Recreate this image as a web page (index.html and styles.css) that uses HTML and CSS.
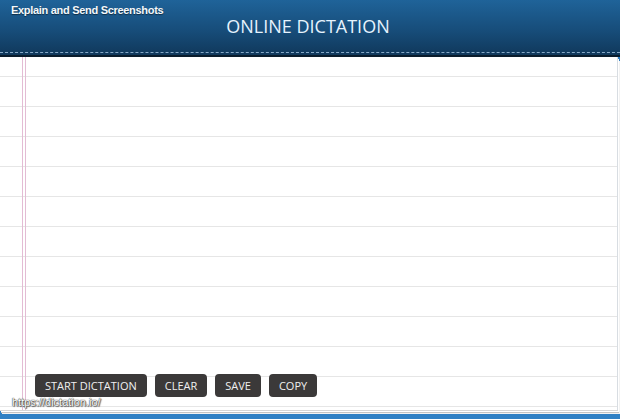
FILE: index.html
```html
<!DOCTYPE html>
<html lang="en">
<head>
    <meta charset="UTF-8">
    <meta name="viewport" content="width=device-width, initial-scale=1.0">
    <title>Online Dictation</title>
    <link rel="stylesheet" href="styles.css">
</head>
<body>
    <header class="topbar">
        <div class="topbar-inner">
            <a class="promo" href="#">Explain and Send Screenshots</a>
            <h1 class="title">ONLINE DICTATION</h1>
        </div>
    </header>

    <main class="paper">
        <div class="writing-area" contenteditable="true"></div>
        <div class="toolbar">
            <button class="tool-button">START DICTATION</button>
            <button class="tool-button">CLEAR</button>
            <button class="tool-button">SAVE</button>
            <button class="tool-button">COPY</button>
        </div>
        <span class="site-url">https://dictation.io/</span>
    </main>
</body>
</html>
```

FILE: styles.css
```css
html, body {
    margin: 0;
    height: 419px;
    overflow: hidden;
}

body {
    background-color: #2f80c4;
    font-family: "Open Sans", "Liberation Sans", sans-serif;
}

/* Header bar */
.topbar {
    background: linear-gradient(to bottom, #1f6399 0%, #174d7a 55%, #10385b 100%);
    border-bottom: 2px solid #0a1c2c;
}

.topbar-inner {
    position: relative;
    height: 52px;
    border-bottom: 1px dashed #86a8c6;
    margin-bottom: 2px;
}

.promo {
    position: absolute;
    left: 11px;
    top: 4px;
    font-family: "Liberation Sans", Arial, sans-serif;
    font-weight: bold;
    font-size: 11px;
    letter-spacing: -0.3px;
    color: #f4f8fb;
    text-decoration: none;
    text-shadow: 0 1px 1px rgba(0, 0, 0, 0.5);
}

.title {
    margin: 0;
    padding-top: 14px;
    padding-right: 4px;
    text-align: center;
    font-weight: normal;
    font-size: 18px;
    line-height: 24px;
    color: #e6f3fd;
}

/* Lined paper */
.paper {
    position: relative;
    display: flex;
    flex-direction: column;
    width: 617px;
    height: 353px;
    background-color: #fff;
    background-image:
        linear-gradient(to right, transparent 22px, #e3bcd4 22px, #e3bcd4 23px, transparent 23px, transparent 25px, #e3bcd4 25px, #e3bcd4 26px, transparent 26px),
        linear-gradient(to bottom, transparent 29px, #e6e6e6 29px, #e6e6e6 30px);
    background-size: 100% 100%, 100% 30px;
    background-position: 0 0, 0 -10px;
    background-repeat: no-repeat, repeat-y;
    box-shadow: 0 1px 0 #d6d6d6, 1px 2px 0 #fff, 1px 3px 0 #c4c4c4, 2px 4px 0 #f2f2f2;
    border-right: 1px solid #d8dde2;
}

.writing-area {
    flex: 1;
    outline: none;
}

.toolbar {
    display: flex;
    gap: 8px;
    padding: 0 0 13px 35px;
}

.tool-button {
    height: 23px;
    padding: 0 10px;
    border: none;
    border-radius: 4px;
    background-color: #3b3939;
    color: #f0f0f0;
    font-family: "Open Sans", "Liberation Sans", sans-serif;
    font-size: 11px;
    cursor: pointer;
}

.tool-button:hover {
    background-color: #555;
}

.site-url {
    position: absolute;
    left: 12px;
    bottom: 2px;
    font-family: "Liberation Sans", Arial, sans-serif;
    font-size: 11px;
    color: #fff;
    text-shadow: 0 0 1px #333, 0 0 1px #333, 1px 1px 1px #555;
}
```
